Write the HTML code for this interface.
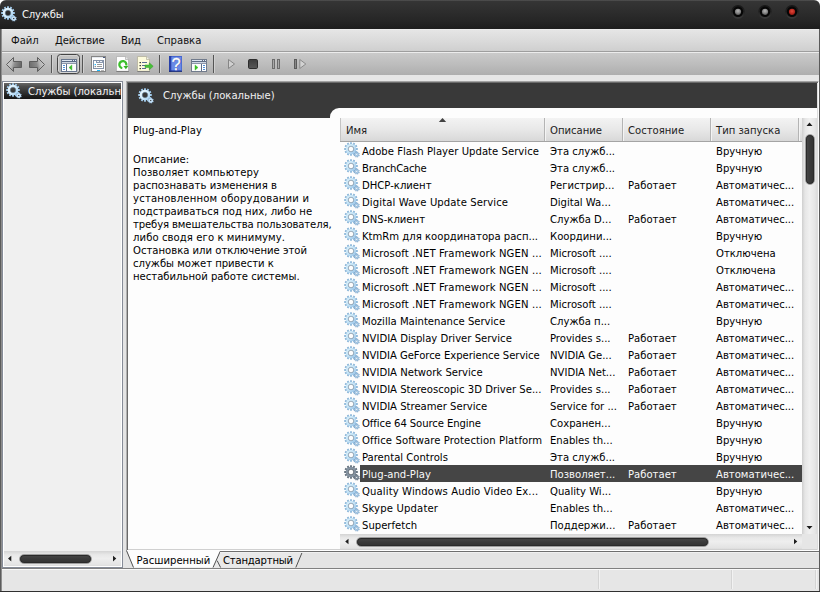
<!DOCTYPE html>
<html><head><meta charset="utf-8"><title>Службы</title>
<style>
*{box-sizing:border-box;margin:0;padding:0}
html,body{width:820px;height:592px;overflow:hidden;background:#fff}
body{font-family:"DejaVu Sans Condensed","Liberation Sans",sans-serif;font-size:11.2px;color:#000;position:relative;line-height:13px}
.abs,#win div,#win span,#win svg{position:absolute}
span{white-space:nowrap}
#win{left:0;top:0;width:820px;height:592px;background:#e4e4e4;border-radius:6px 6px 0 0;overflow:hidden;position:absolute}
/* title */
#title{left:0;top:0;width:820px;height:29px;background:linear-gradient(#5a5a5a 0,#353535 1.2px,#2d2d2d 40%,#262626 70%,#1d1d1d)}
#title .txt{left:22px;top:8px;color:#f4f4f4;font-size:11.2px;letter-spacing:-.2px}
.wb{width:14px;height:14px;border-radius:50%;top:5px;background:radial-gradient(circle at 50% 50%,#050505 0,#070707 4.8px,#1d1d1d 5.3px,#232323 6px,#313131 6.7px,rgba(49,49,49,0) 7px)}
.wb i{position:absolute;left:3.7px;top:3.5px;width:6.6px;height:6.6px;border-radius:50%}
/* menu */
#menu{left:0;top:29px;width:820px;height:23px;background:linear-gradient(#f0f0f0 0,#e5e5e5 1.2px,#dadada 55%,#cfcfcf);border-bottom:1px solid #9e9e9e}
#menu span{top:5px;font-size:11.2px;color:#111}
/* toolbar */
#tool{left:0;top:52px;width:820px;height:23px;background:linear-gradient(#cacaca,#bdbdbd 50%,#aeaeae);border-top:1px solid #ececec}
#strip{left:0;top:75px;width:820px;height:6px;background:#e6e6e6}
.sep{width:1px;top:55px;height:18px;background:#555;box-shadow:1px 0 0 #d0d0d0}
#tbtn{left:57px;top:54px;width:23px;height:20px;border:1px solid #454545;border-radius:3.5px;background:linear-gradient(#c4c4c4,#b4b4b4);box-shadow:inset 0 0 0 1px #d4d4d4}
/* left pane */
#lp{left:2px;top:81px;width:121px;height:487px;background:#f0f0f0;border:1px solid #868c98;box-shadow:inset 0 0 0 1px #fff}
#lsel{left:4px;top:83px;width:117px;height:16px;background:linear-gradient(#686868,#4c4c4c 22%,#343434 55%,#1d1d1d 85%,#141414);overflow:hidden}
#lsel span{letter-spacing:-.04px;left:24px;top:2px;color:#f4f4f4}
/* right pane */
#rp{left:126px;top:81px;width:693px;height:471px;background:#fdfdfd;border-left:1px solid #b0b0b0;border-top:1px solid #a2a2a2;border-right:1px solid #fcfcfc;border-bottom:1px solid #fff;box-shadow:inset 1px 1px 0 #6a6a6a,inset 0 -1px 0 #fff,inset -1px 0 0 #dedede,inset 0 -2px 0 #d0d0d0}
#rhead{left:128px;top:83px;width:689px;height:35px;background:#393939}
#rhead span{left:35px;top:5.5px;color:#f0f0f0}
#lbox{left:330px;top:108px;width:487px;height:441px;background:#fdfdfd;border-top-left-radius:9px}
#desc{left:133px;top:152.5px;width:205px;line-height:13px;white-space:nowrap}
#dtitle{left:133px;top:124px}
#desc span{position:static!important}
/* list */
#lh{left:340px;top:118px;width:462px;height:24px;background:linear-gradient(#f3f3f3,#e8e8e8 50%,#d8d8d8);border-bottom:1px solid #a4a4a4;box-shadow:inset 1px 0 0 #c4c4c4}
.hc{top:0;height:23px;border-right:1px solid #b4b4b4;box-shadow:1px 0 0 #f4f4f4}
.hc span{left:5px;top:6px;color:#222}
.row{left:340px;width:462px;height:17px}
.row .ic{left:3px;top:-1px}
.row span{top:3px;color:#000}
.row .bar{display:none}
.c1{left:22px}.c2{left:210px}.c3{left:288px}.c4{left:376px}
.row.sel .bar{display:block;left:20px;top:0;width:442px;height:17px;background:#454545}
.row.sel span{color:#f8f8f8}
/* scrollbars */
#vs{left:802px;top:118px;width:15px;height:416px;background:linear-gradient(90deg,#cfcfcf,#e6e6e6 20%,#f0f0f0 50%,#e6e6e6 85%,#dcdcdc)}
.thumb{background:linear-gradient(#484848,#3a3a3a 50%,#323232);border:1px solid #9e9e9e;border-radius:5px;box-shadow:inset 0 0 0 1px #2a2a2a}
.thumb.v{background:linear-gradient(90deg,#484848,#3a3a3a 50%,#323232)}
#hs{left:340px;top:534px;width:462px;height:15px;background:linear-gradient(#d4d4d4,#e8e8e8 25%,#eeeeee 50%,#e4e4e4 90%,#dcdcdc)}
#corner{left:802px;top:534px;width:15px;height:15px;background:#e6e6e6}
#lhs{left:4px;top:551px;width:117px;height:15px;background:linear-gradient(#d4d4d4,#e8e8e8 25%,#eeeeee 50%,#e4e4e4 90%,#dcdcdc)}
.arr{width:0;height:0;border:4px solid transparent}
/* tabs */
#tabs{left:126px;top:550px;width:694px;height:18px}
/* status */
#status{left:0;top:568px;width:820px;height:24px;border-top:1px solid #808080;background:#e6e6e6;box-shadow:inset 0 1px 0 #fafafa,inset 0 -1px 0 #f4f4f4}
#bl{left:0;top:29px;width:2px;height:563px;background:linear-gradient(90deg,#5c5c5c 50%,#8e8e8e 50%)}
#br{left:819px;top:29px;width:1px;height:563px;background:#5a5a5a}
#bb{left:0;top:591px;width:820px;height:1px;background:#303030}
.sd{top:1px;width:1px;height:19px;background:#d4d4d4;box-shadow:1px 0 0 #f2f2f2}
</style></head><body>
<svg width="0" height="0" style="position:absolute">
<defs>
<linearGradient id="gg" x1="0" y1="0" x2="1" y2="1"><stop offset="0" stop-color="#eaf7ff"/><stop offset=".55" stop-color="#d4ecfb"/><stop offset="1" stop-color="#a8d2f2"/></linearGradient>
<linearGradient id="gw1" x1="0" y1="0" x2="1" y2="1"><stop offset="0" stop-color="#d6eefa"/><stop offset=".55" stop-color="#c2e2f6"/><stop offset="1" stop-color="#9cc6e8"/></linearGradient>
</defs></svg>
<div id="win">
<div id="title"><svg width="17" height="17" viewBox="0 0 17 17" style="left:0px;top:5px"><path d="M12.7,7.0 L14.8,7.1 L14.8,8.9 L12.7,9.0 L12.6,9.5 L14.4,10.6 L13.5,12.2 L11.6,11.2 L11.2,11.6 L12.2,13.5 L10.6,14.4 L9.5,12.6 L9.0,12.7 L8.9,14.8 L7.1,14.8 L7.0,12.7 L6.5,12.6 L5.4,14.4 L3.8,13.5 L4.8,11.6 L4.4,11.2 L2.5,12.2 L1.6,10.6 L3.4,9.5 L3.3,9.0 L1.2,8.9 L1.2,7.1 L3.3,7.0 L3.4,6.5 L1.6,5.4 L2.5,3.8 L4.4,4.8 L4.8,4.4 L3.8,2.5 L5.4,1.6 L6.5,3.4 L7.0,3.3 L7.1,1.2 L8.9,1.2 L9.0,3.3 L9.5,3.4 L10.6,1.6 L12.2,2.5 L11.2,4.4 L11.6,4.8 L13.5,3.8 L14.4,5.4 L12.6,6.5Z M5.10,8.00 a2.9,2.9 0 1,0 5.8,0 a2.9,2.9 0 1,0 -5.8,0Z" fill="#9fc9ea" fill-rule="evenodd"/><circle cx="8" cy="8" r="4.0" fill="none" stroke="url(#gg)" stroke-width="2.4"/><circle cx="8" cy="8" r="2.75" fill="none" stroke="#5f7486" stroke-width=".7" stroke-opacity=".8"/><path d="M15.8,13.8 L16.7,14.2 L16.3,15.2 L15.4,14.9 L15.1,15.2 L15.4,16.1 L14.4,16.5 L14.0,15.6 L13.6,15.6 L13.2,16.5 L12.2,16.1 L12.5,15.2 L12.2,14.9 L11.3,15.2 L10.9,14.2 L11.8,13.8 L11.8,13.4 L10.9,13.0 L11.3,12.0 L12.2,12.3 L12.5,12.0 L12.2,11.1 L13.2,10.7 L13.6,11.6 L14.0,11.6 L14.4,10.7 L15.4,11.1 L15.1,12.0 L15.4,12.3 L16.3,12.0 L16.7,13.0 L15.8,13.4Z M13.05,13.60 a0.75,0.75 0 1,0 1.5,0 a0.75,0.75 0 1,0 -1.5,0Z" fill="#a0c6e6" fill-rule="evenodd"/><circle cx="13.80" cy="13.60" r="1.5" fill="none" stroke="#c8e2f6" stroke-width="1.3"/></svg><span class="txt">Службы</span>
<svg width="90" height="28" viewBox="724 0 90 28" style="left:724px;top:0">
<defs><linearGradient id="wr" x1="0" y1="0" x2="0" y2="1"><stop offset="0" stop-color="#161616"/><stop offset=".5" stop-color="#222"/><stop offset="1" stop-color="#3b3b3b"/></linearGradient>
<radialGradient id="wg" cx=".5" cy=".35" r=".7"><stop offset="0" stop-color="#b4b4b4"/><stop offset=".5" stop-color="#8a8a8a"/><stop offset="1" stop-color="#4e4e4e"/></radialGradient>
<radialGradient id="wrd" cx=".5" cy=".4" r=".7"><stop offset="0" stop-color="#e04a3c"/><stop offset=".5" stop-color="#bc2a20"/><stop offset="1" stop-color="#7c1410"/></radialGradient></defs>
<circle cx="738" cy="11.8" r="6.9" fill="url(#wr)"/><circle cx="738" cy="11.8" r="5.2" fill="#060606"/><circle cx="738" cy="11.8" r="3.1" fill="url(#wg)"/>
<circle cx="765" cy="11.8" r="6.9" fill="url(#wr)"/><circle cx="765" cy="11.8" r="5.2" fill="#060606"/><circle cx="765" cy="11.8" r="3.1" fill="url(#wg)"/>
<circle cx="792" cy="11.8" r="6.9" fill="url(#wr)"/><circle cx="792" cy="11.8" r="5.2" fill="#060606"/><circle cx="792" cy="11.8" r="3.1" fill="url(#wrd)"/>
</svg>
</div>
<div id="menu"><span style="left:11px">Файл</span><span style="left:55px;letter-spacing:-.15px">Действие</span><span style="left:121px;letter-spacing:-.2px">Вид</span><span style="left:157px">Справка</span></div>
<div id="tool"></div>
<div id="strip"></div>
<div class="sep" style="left:51px"></div><div class="sep" style="left:82px"></div><div class="sep" style="left:159px"></div><div class="sep" style="left:213px"></div>
<div id="tbtn"></div>
<svg width="330" height="24" viewBox="0 52 330 24" style="left:0;top:52px">
<defs>
<linearGradient id="ag" x1="0" y1="0" x2="0" y2="1"><stop offset="0" stop-color="#c4c4c4"/><stop offset=".45" stop-color="#808080"/><stop offset="1" stop-color="#bcbcbc"/></linearGradient>
<linearGradient id="sg" x1="0" y1="0" x2="0" y2="1"><stop offset="0" stop-color="#3c3c3c"/><stop offset="1" stop-color="#585858"/></linearGradient>
</defs>
<!-- back / forward arrows -->
<linearGradient id="ab" x1="0" y1="0" x2="1" y2="0.25"><stop offset="0" stop-color="#cecece"/><stop offset=".42" stop-color="#bcbcbc"/><stop offset=".62" stop-color="#8e8e8e"/><stop offset="1" stop-color="#6a6a6a"/></linearGradient>
<linearGradient id="af" x1="0" y1="0.25" x2="1" y2="0"><stop offset="0" stop-color="#727272"/><stop offset=".4" stop-color="#8a8a8a"/><stop offset=".58" stop-color="#b4b4b4"/><stop offset="1" stop-color="#d0d0d0"/></linearGradient>
<path d="M6.5,64.5 L13.5,57.5 L13.5,61.5 L21.5,61.5 L21.5,67.5 L13.5,67.5 L13.5,71.5Z" fill="url(#ab)" stroke="#5e5e5e" stroke-width="1" stroke-linejoin="round"/>
<path d="M44.5,64.5 L37.5,57.5 L37.5,61.5 L29.5,61.5 L29.5,67.5 L37.5,67.5 L37.5,71.5Z" fill="url(#af)" stroke="#5e5e5e" stroke-width="1" stroke-linejoin="round"/>
<!-- console tree icon -->
<g>
<rect x="61" y="59" width="16" height="13" fill="#69778f"/>
<rect x="62" y="60" width="14" height="2" fill="#5a6a86"/>
<rect x="62" y="60" width="10" height="1" fill="#dde5f0"/><rect x="73" y="60" width="1" height="1" fill="#e6ecf5"/><rect x="75" y="60" width="1" height="1" fill="#e6ecf5"/>
<rect x="62" y="62" width="14" height="1" fill="#cdd5e1"/>
<rect x="62" y="63" width="14" height="1" fill="#8d97ab"/>
<rect x="62" y="64" width="4" height="7" fill="#fff"/><rect x="67" y="64" width="9" height="7" fill="#fcfcfc"/>
<rect x="66" y="64" width="1" height="7" fill="#5e6d88"/>
<rect x="63" y="65" width="2" height="1" rx=".4" fill="#2c78d2"/><rect x="63" y="67" width="2" height="1" rx=".4" fill="#2c78d2"/><rect x="63" y="69" width="2" height="1" rx=".4" fill="#2c78d2"/>
<path d="M71.9,64.9 L71.9,70.2 L69,67.55Z" fill="#36b826" stroke="#36b826" stroke-width=".4" stroke-linejoin="round"/>
</g>
<!-- properties icon -->
<g>
<rect x="91.5" y="56.5" width="14" height="15" fill="#fdfdfd" stroke="#858585" stroke-width="1"/>
<rect x="92" y="57" width="13" height="1" fill="#e4e8ee"/>
<rect x="103" y="57" width="2" height="1" fill="#4a5a80"/>
<rect x="93.5" y="60.5" width="10" height="8" fill="#fff" stroke="#8492a8" stroke-width="1"/>
<rect x="96" y="61" width="7" height="2" fill="#8c9ab0"/>
<rect x="97" y="61" width="2" height="1" fill="#f4f6fa"/><rect x="100" y="61" width="2" height="1" fill="#f4f6fa"/>
<rect x="94.6" y="64" width="1.3" height="1.2" fill="#18b4fc"/><rect x="97" y="64" width="5" height="1" fill="#9a9a9a"/>
<rect x="94.6" y="66" width="1.3" height="1.2" fill="#8a8a8a"/><rect x="97" y="66" width="5" height="1" fill="#9a9a9a"/>
<rect x="97" y="70" width="3" height="1" fill="#1ab8fc"/><rect x="101" y="70" width="3" height="1" fill="#b4b4b4"/>
</g>
<!-- refresh icon -->
<g>
<path d="M116.5,56.5 L125.5,56.5 L128.5,59.5 L128.5,71.3 L116.5,71.3Z" fill="#fefefe" stroke="#b0b0b0" stroke-width=".8"/><rect x="116.3" y="71" width="12.6" height="1" fill="#7c7c7c"/>
<path d="M125.5,56.5 L125.5,59.5 L128.5,59.5" fill="#e8e8e8" stroke="#a0a0a0" stroke-width=".6"/>
<path d="M122.3,68.1 A3.5,3.5 0 1,1 126.25,65.4" fill="none" stroke="#3cc02c" stroke-width="2.3"/>
<path d="M123.4,66 L128.3,66 L125.9,69.2Z" fill="#34b424"/>
</g>
<!-- export icon -->
<g>
<path d="M137.5,56.5 L146.5,56.5 L149.5,59.5 L149.5,71.3 L137.5,71.3Z" fill="#fdfbdc" stroke="#b4b09c" stroke-width=".8"/><rect x="137.3" y="71" width="12.6" height="1" fill="#7c7c7c"/>
<path d="M146.5,56.5 L146.5,59.5 L149.5,59.5" fill="#f0f0e8" stroke="#a8a490" stroke-width=".6"/>
<rect x="139.6" y="62" width="1.2" height="1.2" fill="#111"/><rect x="142" y="62" width="5" height="1" fill="#5a6c94"/>
<rect x="139.6" y="65" width="1.2" height="1.2" fill="#111"/><rect x="142" y="65" width="3" height="1" fill="#5a6c94"/>
<rect x="139.6" y="68" width="1.2" height="1.2" fill="#111"/><rect x="142" y="68" width="4" height="1" fill="#5a6c94"/>
<path d="M145,65 L149.3,65 L149.3,62.8 L153.2,66.3 L149.3,69.8 L149.3,67.6 L145,67.6Z" fill="#48c038" stroke="#2e9c22" stroke-width=".5"/>
</g>
<!-- help icon -->
<g>
<rect x="169" y="56" width="13" height="15.8" fill="#4666d0"/>
<rect x="169" y="56" width="2.4" height="15.8" fill="#2840a8"/>
<rect x="171.4" y="57" width="9.8" height="13" fill="#6a8ae4"/>
<rect x="169" y="70.8" width="13" height="1" fill="#1c2c70"/>
<text x="177" y="70.4" font-family="Liberation Sans,sans-serif" font-size="16" fill="#26348c" text-anchor="middle">?</text><text x="176.3" y="69.9" font-family="Liberation Sans,sans-serif" font-size="16" fill="#fff" stroke="#fff" stroke-width=".35" text-anchor="middle">?</text>
</g>
<!-- action pane icon -->
<g>
<rect x="191" y="59" width="16" height="13" fill="#717b8c"/>
<rect x="192" y="60" width="14" height="2" fill="#5f6d86"/>
<rect x="192" y="60" width="10" height="1" fill="#dde5f0"/><rect x="203" y="60" width="1" height="1" fill="#e6ecf5"/><rect x="205" y="60" width="1" height="1" fill="#e6ecf5"/>
<rect x="192" y="62" width="14" height="1" fill="#cdd5e1"/>
<rect x="192" y="63" width="14" height="1" fill="#8d97ab"/>
<rect x="192" y="64" width="9" height="7" fill="#fcfcfc"/><rect x="202" y="64" width="4" height="7" fill="#fff"/>
<rect x="201" y="64" width="1" height="7" fill="#5e6d88"/>
<rect x="203" y="65" width="2" height="1" rx=".4" fill="#2c78d2"/><rect x="203" y="67" width="2" height="1" rx=".4" fill="#2c78d2"/><rect x="203" y="69" width="2" height="1" rx=".4" fill="#2c78d2"/>
<path d="M195,64.9 L195,70.2 L198,67.55Z" fill="#36c022" stroke="#36c022" stroke-width=".4" stroke-linejoin="round"/>
</g>
<!-- play / stop / pause / restart -->
<path d="M228.5,59.5 L228.5,68.5 L234.5,64Z" fill="#d0d0d0" stroke="#868686" stroke-width="1" stroke-linejoin="round"/>
<rect x="248.5" y="59.5" width="9" height="9" rx="1.2" fill="url(#sg)" stroke="#2c2c2c" stroke-width="1"/>
<rect x="272.5" y="59.5" width="2" height="9" fill="#a8a8a8" stroke="#6c6c6c" stroke-width="1"/>
<rect x="277.5" y="59.5" width="2" height="9" fill="#a8a8a8" stroke="#6c6c6c" stroke-width="1"/>
<rect x="294.5" y="59.5" width="2" height="9" fill="#888" stroke="#5c5c5c" stroke-width="1"/>
<path d="M299.8,59.5 L299.8,68.5 L305.8,64Z" fill="#d2d2d2" stroke="#8a8a8a" stroke-width="1" stroke-linejoin="round"/>
</svg>

<div id="lp"></div>
<div id="lsel"><svg width="17" height="17" viewBox="0 0 17 17" style="left:1px;top:-1px"><path d="M12.7,7.0 L14.8,7.1 L14.8,8.9 L12.7,9.0 L12.6,9.5 L14.4,10.6 L13.5,12.2 L11.6,11.2 L11.2,11.6 L12.2,13.5 L10.6,14.4 L9.5,12.6 L9.0,12.7 L8.9,14.8 L7.1,14.8 L7.0,12.7 L6.5,12.6 L5.4,14.4 L3.8,13.5 L4.8,11.6 L4.4,11.2 L2.5,12.2 L1.6,10.6 L3.4,9.5 L3.3,9.0 L1.2,8.9 L1.2,7.1 L3.3,7.0 L3.4,6.5 L1.6,5.4 L2.5,3.8 L4.4,4.8 L4.8,4.4 L3.8,2.5 L5.4,1.6 L6.5,3.4 L7.0,3.3 L7.1,1.2 L8.9,1.2 L9.0,3.3 L9.5,3.4 L10.6,1.6 L12.2,2.5 L11.2,4.4 L11.6,4.8 L13.5,3.8 L14.4,5.4 L12.6,6.5Z M5.10,8.00 a2.9,2.9 0 1,0 5.8,0 a2.9,2.9 0 1,0 -5.8,0Z" fill="#9fc9ea" fill-rule="evenodd"/><circle cx="8" cy="8" r="4.0" fill="none" stroke="url(#gg)" stroke-width="2.4"/><circle cx="8" cy="8" r="2.75" fill="none" stroke="#5f7486" stroke-width=".7" stroke-opacity=".8"/><path d="M15.8,13.8 L16.7,14.2 L16.3,15.2 L15.4,14.9 L15.1,15.2 L15.4,16.1 L14.4,16.5 L14.0,15.6 L13.6,15.6 L13.2,16.5 L12.2,16.1 L12.5,15.2 L12.2,14.9 L11.3,15.2 L10.9,14.2 L11.8,13.8 L11.8,13.4 L10.9,13.0 L11.3,12.0 L12.2,12.3 L12.5,12.0 L12.2,11.1 L13.2,10.7 L13.6,11.6 L14.0,11.6 L14.4,10.7 L15.4,11.1 L15.1,12.0 L15.4,12.3 L16.3,12.0 L16.7,13.0 L15.8,13.4Z M13.05,13.60 a0.75,0.75 0 1,0 1.5,0 a0.75,0.75 0 1,0 -1.5,0Z" fill="#a0c6e6" fill-rule="evenodd"/><circle cx="13.80" cy="13.60" r="1.5" fill="none" stroke="#c8e2f6" stroke-width="1.3"/></svg><span>Службы (локальн</span></div>
<div id="lhs"></div><div class="thumb" style="left:19px;top:554px;width:73px;height:10px"></div>
<div id="rp"></div>
<div id="rhead"><svg width="17" height="17" viewBox="0 0 17 17" style="left:9px;top:4px"><path d="M12.7,7.0 L14.8,7.1 L14.8,8.9 L12.7,9.0 L12.6,9.5 L14.4,10.6 L13.5,12.2 L11.6,11.2 L11.2,11.6 L12.2,13.5 L10.6,14.4 L9.5,12.6 L9.0,12.7 L8.9,14.8 L7.1,14.8 L7.0,12.7 L6.5,12.6 L5.4,14.4 L3.8,13.5 L4.8,11.6 L4.4,11.2 L2.5,12.2 L1.6,10.6 L3.4,9.5 L3.3,9.0 L1.2,8.9 L1.2,7.1 L3.3,7.0 L3.4,6.5 L1.6,5.4 L2.5,3.8 L4.4,4.8 L4.8,4.4 L3.8,2.5 L5.4,1.6 L6.5,3.4 L7.0,3.3 L7.1,1.2 L8.9,1.2 L9.0,3.3 L9.5,3.4 L10.6,1.6 L12.2,2.5 L11.2,4.4 L11.6,4.8 L13.5,3.8 L14.4,5.4 L12.6,6.5Z M5.10,8.00 a2.9,2.9 0 1,0 5.8,0 a2.9,2.9 0 1,0 -5.8,0Z" fill="#9fc9ea" fill-rule="evenodd"/><circle cx="8" cy="8" r="4.0" fill="none" stroke="url(#gg)" stroke-width="2.4"/><circle cx="8" cy="8" r="2.75" fill="none" stroke="#5f7486" stroke-width=".7" stroke-opacity=".8"/><path d="M15.8,13.8 L16.7,14.2 L16.3,15.2 L15.4,14.9 L15.1,15.2 L15.4,16.1 L14.4,16.5 L14.0,15.6 L13.6,15.6 L13.2,16.5 L12.2,16.1 L12.5,15.2 L12.2,14.9 L11.3,15.2 L10.9,14.2 L11.8,13.8 L11.8,13.4 L10.9,13.0 L11.3,12.0 L12.2,12.3 L12.5,12.0 L12.2,11.1 L13.2,10.7 L13.6,11.6 L14.0,11.6 L14.4,10.7 L15.4,11.1 L15.1,12.0 L15.4,12.3 L16.3,12.0 L16.7,13.0 L15.8,13.4Z M13.05,13.60 a0.75,0.75 0 1,0 1.5,0 a0.75,0.75 0 1,0 -1.5,0Z" fill="#a0c6e6" fill-rule="evenodd"/><circle cx="13.80" cy="13.60" r="1.5" fill="none" stroke="#c8e2f6" stroke-width="1.3"/></svg><span>Службы (локальные)</span></div>
<div id="lbox"></div>
<span id="dtitle">Plug-and-Play</span>
<div id="desc"><span style="letter-spacing:0.094px">Описание:</span><br><span style="letter-spacing:0.093px">Позволяет компьютеру</span><br><span style="letter-spacing:0.050px">распознавать изменения в</span><br><span style="letter-spacing:0.207px">установленном оборудовании и</span><br><span style="letter-spacing:0.018px">подстраиваться под них, либо не</span><br><span style="letter-spacing:-0.119px">требуя вмешательства пользователя,</span><br><span style="letter-spacing:0.080px">либо сводя его к минимуму.</span><br><span style="letter-spacing:-0.002px">Остановка или отключение этой</span><br><span style="letter-spacing:-0.020px">службы может привести к</span><br><span style="letter-spacing:0.004px">нестабильной работе системы.</span></div>
<div id="lh">
<div class="hc" style="left:0;width:205px"><span style="left:6px">Имя</span></div>
<div class="hc" style="left:205px;width:78px"><span style="left:5px">Описание</span></div>
<div class="hc" style="left:283px;width:88px"><span style="left:5px">Состояние</span></div>
<div class="hc" style="left:371px;width:88px"><span style="left:5px">Тип запуска</span></div>
</div>
<div class="row" style="top:142px"><svg class="ic" width="17" height="17" viewBox="0 0 17 17"><path d="M12.7,7.0 L14.8,7.1 L14.8,8.9 L12.7,9.0 L12.6,9.5 L14.4,10.6 L13.5,12.2 L11.6,11.2 L11.2,11.6 L12.2,13.5 L10.6,14.4 L9.5,12.6 L9.0,12.7 L8.9,14.8 L7.1,14.8 L7.0,12.7 L6.5,12.6 L5.4,14.4 L3.8,13.5 L4.8,11.6 L4.4,11.2 L2.5,12.2 L1.6,10.6 L3.4,9.5 L3.3,9.0 L1.2,8.9 L1.2,7.1 L3.3,7.0 L3.4,6.5 L1.6,5.4 L2.5,3.8 L4.4,4.8 L4.8,4.4 L3.8,2.5 L5.4,1.6 L6.5,3.4 L7.0,3.3 L7.1,1.2 L8.9,1.2 L9.0,3.3 L9.5,3.4 L10.6,1.6 L12.2,2.5 L11.2,4.4 L11.6,4.8 L13.5,3.8 L14.4,5.4 L12.6,6.5Z M5.10,8.00 a2.9,2.9 0 1,0 5.8,0 a2.9,2.9 0 1,0 -5.8,0Z" fill="#8db7d9" fill-rule="evenodd"/><circle cx="8" cy="8" r="4.0" fill="none" stroke="url(#gw1)" stroke-width="2.4"/><circle cx="8" cy="8" r="2.75" fill="none" stroke="#66788a" stroke-width=".7" stroke-opacity=".8"/><path d="M15.8,13.8 L16.7,14.2 L16.3,15.2 L15.4,14.9 L15.1,15.2 L15.4,16.1 L14.4,16.5 L14.0,15.6 L13.6,15.6 L13.2,16.5 L12.2,16.1 L12.5,15.2 L12.2,14.9 L11.3,15.2 L10.9,14.2 L11.8,13.8 L11.8,13.4 L10.9,13.0 L11.3,12.0 L12.2,12.3 L12.5,12.0 L12.2,11.1 L13.2,10.7 L13.6,11.6 L14.0,11.6 L14.4,10.7 L15.4,11.1 L15.1,12.0 L15.4,12.3 L16.3,12.0 L16.7,13.0 L15.8,13.4Z M13.05,13.60 a0.75,0.75 0 1,0 1.5,0 a0.75,0.75 0 1,0 -1.5,0Z" fill="#7ea6ca" fill-rule="evenodd"/><circle cx="13.80" cy="13.60" r="1.5" fill="none" stroke="#acccE6" stroke-width="1.3"/></svg><div class="bar"></div><span class="c1" style="letter-spacing:0.03px">Adobe Flash Player Update Service</span><span class="c2">Эта служб...</span><span class="c3"></span><span class="c4">Вручную</span></div>
<div class="row" style="top:159px"><svg class="ic" width="17" height="17" viewBox="0 0 17 17"><path d="M12.7,7.0 L14.8,7.1 L14.8,8.9 L12.7,9.0 L12.6,9.5 L14.4,10.6 L13.5,12.2 L11.6,11.2 L11.2,11.6 L12.2,13.5 L10.6,14.4 L9.5,12.6 L9.0,12.7 L8.9,14.8 L7.1,14.8 L7.0,12.7 L6.5,12.6 L5.4,14.4 L3.8,13.5 L4.8,11.6 L4.4,11.2 L2.5,12.2 L1.6,10.6 L3.4,9.5 L3.3,9.0 L1.2,8.9 L1.2,7.1 L3.3,7.0 L3.4,6.5 L1.6,5.4 L2.5,3.8 L4.4,4.8 L4.8,4.4 L3.8,2.5 L5.4,1.6 L6.5,3.4 L7.0,3.3 L7.1,1.2 L8.9,1.2 L9.0,3.3 L9.5,3.4 L10.6,1.6 L12.2,2.5 L11.2,4.4 L11.6,4.8 L13.5,3.8 L14.4,5.4 L12.6,6.5Z M5.10,8.00 a2.9,2.9 0 1,0 5.8,0 a2.9,2.9 0 1,0 -5.8,0Z" fill="#8db7d9" fill-rule="evenodd"/><circle cx="8" cy="8" r="4.0" fill="none" stroke="url(#gw1)" stroke-width="2.4"/><circle cx="8" cy="8" r="2.75" fill="none" stroke="#66788a" stroke-width=".7" stroke-opacity=".8"/><path d="M15.8,13.8 L16.7,14.2 L16.3,15.2 L15.4,14.9 L15.1,15.2 L15.4,16.1 L14.4,16.5 L14.0,15.6 L13.6,15.6 L13.2,16.5 L12.2,16.1 L12.5,15.2 L12.2,14.9 L11.3,15.2 L10.9,14.2 L11.8,13.8 L11.8,13.4 L10.9,13.0 L11.3,12.0 L12.2,12.3 L12.5,12.0 L12.2,11.1 L13.2,10.7 L13.6,11.6 L14.0,11.6 L14.4,10.7 L15.4,11.1 L15.1,12.0 L15.4,12.3 L16.3,12.0 L16.7,13.0 L15.8,13.4Z M13.05,13.60 a0.75,0.75 0 1,0 1.5,0 a0.75,0.75 0 1,0 -1.5,0Z" fill="#7ea6ca" fill-rule="evenodd"/><circle cx="13.80" cy="13.60" r="1.5" fill="none" stroke="#acccE6" stroke-width="1.3"/></svg><div class="bar"></div><span class="c1" style="letter-spacing:-0.22px">BranchCache</span><span class="c2">Эта служб...</span><span class="c3"></span><span class="c4">Вручную</span></div>
<div class="row" style="top:176px"><svg class="ic" width="17" height="17" viewBox="0 0 17 17"><path d="M12.7,7.0 L14.8,7.1 L14.8,8.9 L12.7,9.0 L12.6,9.5 L14.4,10.6 L13.5,12.2 L11.6,11.2 L11.2,11.6 L12.2,13.5 L10.6,14.4 L9.5,12.6 L9.0,12.7 L8.9,14.8 L7.1,14.8 L7.0,12.7 L6.5,12.6 L5.4,14.4 L3.8,13.5 L4.8,11.6 L4.4,11.2 L2.5,12.2 L1.6,10.6 L3.4,9.5 L3.3,9.0 L1.2,8.9 L1.2,7.1 L3.3,7.0 L3.4,6.5 L1.6,5.4 L2.5,3.8 L4.4,4.8 L4.8,4.4 L3.8,2.5 L5.4,1.6 L6.5,3.4 L7.0,3.3 L7.1,1.2 L8.9,1.2 L9.0,3.3 L9.5,3.4 L10.6,1.6 L12.2,2.5 L11.2,4.4 L11.6,4.8 L13.5,3.8 L14.4,5.4 L12.6,6.5Z M5.10,8.00 a2.9,2.9 0 1,0 5.8,0 a2.9,2.9 0 1,0 -5.8,0Z" fill="#8db7d9" fill-rule="evenodd"/><circle cx="8" cy="8" r="4.0" fill="none" stroke="url(#gw1)" stroke-width="2.4"/><circle cx="8" cy="8" r="2.75" fill="none" stroke="#66788a" stroke-width=".7" stroke-opacity=".8"/><path d="M15.8,13.8 L16.7,14.2 L16.3,15.2 L15.4,14.9 L15.1,15.2 L15.4,16.1 L14.4,16.5 L14.0,15.6 L13.6,15.6 L13.2,16.5 L12.2,16.1 L12.5,15.2 L12.2,14.9 L11.3,15.2 L10.9,14.2 L11.8,13.8 L11.8,13.4 L10.9,13.0 L11.3,12.0 L12.2,12.3 L12.5,12.0 L12.2,11.1 L13.2,10.7 L13.6,11.6 L14.0,11.6 L14.4,10.7 L15.4,11.1 L15.1,12.0 L15.4,12.3 L16.3,12.0 L16.7,13.0 L15.8,13.4Z M13.05,13.60 a0.75,0.75 0 1,0 1.5,0 a0.75,0.75 0 1,0 -1.5,0Z" fill="#7ea6ca" fill-rule="evenodd"/><circle cx="13.80" cy="13.60" r="1.5" fill="none" stroke="#acccE6" stroke-width="1.3"/></svg><div class="bar"></div><span class="c1">DHCP-клиент</span><span class="c2">Регистрир...</span><span class="c3">Работает</span><span class="c4">Автоматичес...</span></div>
<div class="row" style="top:193px"><svg class="ic" width="17" height="17" viewBox="0 0 17 17"><path d="M12.7,7.0 L14.8,7.1 L14.8,8.9 L12.7,9.0 L12.6,9.5 L14.4,10.6 L13.5,12.2 L11.6,11.2 L11.2,11.6 L12.2,13.5 L10.6,14.4 L9.5,12.6 L9.0,12.7 L8.9,14.8 L7.1,14.8 L7.0,12.7 L6.5,12.6 L5.4,14.4 L3.8,13.5 L4.8,11.6 L4.4,11.2 L2.5,12.2 L1.6,10.6 L3.4,9.5 L3.3,9.0 L1.2,8.9 L1.2,7.1 L3.3,7.0 L3.4,6.5 L1.6,5.4 L2.5,3.8 L4.4,4.8 L4.8,4.4 L3.8,2.5 L5.4,1.6 L6.5,3.4 L7.0,3.3 L7.1,1.2 L8.9,1.2 L9.0,3.3 L9.5,3.4 L10.6,1.6 L12.2,2.5 L11.2,4.4 L11.6,4.8 L13.5,3.8 L14.4,5.4 L12.6,6.5Z M5.10,8.00 a2.9,2.9 0 1,0 5.8,0 a2.9,2.9 0 1,0 -5.8,0Z" fill="#8db7d9" fill-rule="evenodd"/><circle cx="8" cy="8" r="4.0" fill="none" stroke="url(#gw1)" stroke-width="2.4"/><circle cx="8" cy="8" r="2.75" fill="none" stroke="#66788a" stroke-width=".7" stroke-opacity=".8"/><path d="M15.8,13.8 L16.7,14.2 L16.3,15.2 L15.4,14.9 L15.1,15.2 L15.4,16.1 L14.4,16.5 L14.0,15.6 L13.6,15.6 L13.2,16.5 L12.2,16.1 L12.5,15.2 L12.2,14.9 L11.3,15.2 L10.9,14.2 L11.8,13.8 L11.8,13.4 L10.9,13.0 L11.3,12.0 L12.2,12.3 L12.5,12.0 L12.2,11.1 L13.2,10.7 L13.6,11.6 L14.0,11.6 L14.4,10.7 L15.4,11.1 L15.1,12.0 L15.4,12.3 L16.3,12.0 L16.7,13.0 L15.8,13.4Z M13.05,13.60 a0.75,0.75 0 1,0 1.5,0 a0.75,0.75 0 1,0 -1.5,0Z" fill="#7ea6ca" fill-rule="evenodd"/><circle cx="13.80" cy="13.60" r="1.5" fill="none" stroke="#acccE6" stroke-width="1.3"/></svg><div class="bar"></div><span class="c1" style="letter-spacing:0.1px">Digital Wave Update Service</span><span class="c2">Digital Wa...</span><span class="c3"></span><span class="c4">Автоматичес...</span></div>
<div class="row" style="top:210px"><svg class="ic" width="17" height="17" viewBox="0 0 17 17"><path d="M12.7,7.0 L14.8,7.1 L14.8,8.9 L12.7,9.0 L12.6,9.5 L14.4,10.6 L13.5,12.2 L11.6,11.2 L11.2,11.6 L12.2,13.5 L10.6,14.4 L9.5,12.6 L9.0,12.7 L8.9,14.8 L7.1,14.8 L7.0,12.7 L6.5,12.6 L5.4,14.4 L3.8,13.5 L4.8,11.6 L4.4,11.2 L2.5,12.2 L1.6,10.6 L3.4,9.5 L3.3,9.0 L1.2,8.9 L1.2,7.1 L3.3,7.0 L3.4,6.5 L1.6,5.4 L2.5,3.8 L4.4,4.8 L4.8,4.4 L3.8,2.5 L5.4,1.6 L6.5,3.4 L7.0,3.3 L7.1,1.2 L8.9,1.2 L9.0,3.3 L9.5,3.4 L10.6,1.6 L12.2,2.5 L11.2,4.4 L11.6,4.8 L13.5,3.8 L14.4,5.4 L12.6,6.5Z M5.10,8.00 a2.9,2.9 0 1,0 5.8,0 a2.9,2.9 0 1,0 -5.8,0Z" fill="#8db7d9" fill-rule="evenodd"/><circle cx="8" cy="8" r="4.0" fill="none" stroke="url(#gw1)" stroke-width="2.4"/><circle cx="8" cy="8" r="2.75" fill="none" stroke="#66788a" stroke-width=".7" stroke-opacity=".8"/><path d="M15.8,13.8 L16.7,14.2 L16.3,15.2 L15.4,14.9 L15.1,15.2 L15.4,16.1 L14.4,16.5 L14.0,15.6 L13.6,15.6 L13.2,16.5 L12.2,16.1 L12.5,15.2 L12.2,14.9 L11.3,15.2 L10.9,14.2 L11.8,13.8 L11.8,13.4 L10.9,13.0 L11.3,12.0 L12.2,12.3 L12.5,12.0 L12.2,11.1 L13.2,10.7 L13.6,11.6 L14.0,11.6 L14.4,10.7 L15.4,11.1 L15.1,12.0 L15.4,12.3 L16.3,12.0 L16.7,13.0 L15.8,13.4Z M13.05,13.60 a0.75,0.75 0 1,0 1.5,0 a0.75,0.75 0 1,0 -1.5,0Z" fill="#7ea6ca" fill-rule="evenodd"/><circle cx="13.80" cy="13.60" r="1.5" fill="none" stroke="#acccE6" stroke-width="1.3"/></svg><div class="bar"></div><span class="c1">DNS-клиент</span><span class="c2">Служба D...</span><span class="c3">Работает</span><span class="c4">Автоматичес...</span></div>
<div class="row" style="top:227px"><svg class="ic" width="17" height="17" viewBox="0 0 17 17"><path d="M12.7,7.0 L14.8,7.1 L14.8,8.9 L12.7,9.0 L12.6,9.5 L14.4,10.6 L13.5,12.2 L11.6,11.2 L11.2,11.6 L12.2,13.5 L10.6,14.4 L9.5,12.6 L9.0,12.7 L8.9,14.8 L7.1,14.8 L7.0,12.7 L6.5,12.6 L5.4,14.4 L3.8,13.5 L4.8,11.6 L4.4,11.2 L2.5,12.2 L1.6,10.6 L3.4,9.5 L3.3,9.0 L1.2,8.9 L1.2,7.1 L3.3,7.0 L3.4,6.5 L1.6,5.4 L2.5,3.8 L4.4,4.8 L4.8,4.4 L3.8,2.5 L5.4,1.6 L6.5,3.4 L7.0,3.3 L7.1,1.2 L8.9,1.2 L9.0,3.3 L9.5,3.4 L10.6,1.6 L12.2,2.5 L11.2,4.4 L11.6,4.8 L13.5,3.8 L14.4,5.4 L12.6,6.5Z M5.10,8.00 a2.9,2.9 0 1,0 5.8,0 a2.9,2.9 0 1,0 -5.8,0Z" fill="#8db7d9" fill-rule="evenodd"/><circle cx="8" cy="8" r="4.0" fill="none" stroke="url(#gw1)" stroke-width="2.4"/><circle cx="8" cy="8" r="2.75" fill="none" stroke="#66788a" stroke-width=".7" stroke-opacity=".8"/><path d="M15.8,13.8 L16.7,14.2 L16.3,15.2 L15.4,14.9 L15.1,15.2 L15.4,16.1 L14.4,16.5 L14.0,15.6 L13.6,15.6 L13.2,16.5 L12.2,16.1 L12.5,15.2 L12.2,14.9 L11.3,15.2 L10.9,14.2 L11.8,13.8 L11.8,13.4 L10.9,13.0 L11.3,12.0 L12.2,12.3 L12.5,12.0 L12.2,11.1 L13.2,10.7 L13.6,11.6 L14.0,11.6 L14.4,10.7 L15.4,11.1 L15.1,12.0 L15.4,12.3 L16.3,12.0 L16.7,13.0 L15.8,13.4Z M13.05,13.60 a0.75,0.75 0 1,0 1.5,0 a0.75,0.75 0 1,0 -1.5,0Z" fill="#7ea6ca" fill-rule="evenodd"/><circle cx="13.80" cy="13.60" r="1.5" fill="none" stroke="#acccE6" stroke-width="1.3"/></svg><div class="bar"></div><span class="c1">KtmRm для координатора расп...</span><span class="c2">Координи...</span><span class="c3"></span><span class="c4">Вручную</span></div>
<div class="row" style="top:244px"><svg class="ic" width="17" height="17" viewBox="0 0 17 17"><path d="M12.7,7.0 L14.8,7.1 L14.8,8.9 L12.7,9.0 L12.6,9.5 L14.4,10.6 L13.5,12.2 L11.6,11.2 L11.2,11.6 L12.2,13.5 L10.6,14.4 L9.5,12.6 L9.0,12.7 L8.9,14.8 L7.1,14.8 L7.0,12.7 L6.5,12.6 L5.4,14.4 L3.8,13.5 L4.8,11.6 L4.4,11.2 L2.5,12.2 L1.6,10.6 L3.4,9.5 L3.3,9.0 L1.2,8.9 L1.2,7.1 L3.3,7.0 L3.4,6.5 L1.6,5.4 L2.5,3.8 L4.4,4.8 L4.8,4.4 L3.8,2.5 L5.4,1.6 L6.5,3.4 L7.0,3.3 L7.1,1.2 L8.9,1.2 L9.0,3.3 L9.5,3.4 L10.6,1.6 L12.2,2.5 L11.2,4.4 L11.6,4.8 L13.5,3.8 L14.4,5.4 L12.6,6.5Z M5.10,8.00 a2.9,2.9 0 1,0 5.8,0 a2.9,2.9 0 1,0 -5.8,0Z" fill="#8db7d9" fill-rule="evenodd"/><circle cx="8" cy="8" r="4.0" fill="none" stroke="url(#gw1)" stroke-width="2.4"/><circle cx="8" cy="8" r="2.75" fill="none" stroke="#66788a" stroke-width=".7" stroke-opacity=".8"/><path d="M15.8,13.8 L16.7,14.2 L16.3,15.2 L15.4,14.9 L15.1,15.2 L15.4,16.1 L14.4,16.5 L14.0,15.6 L13.6,15.6 L13.2,16.5 L12.2,16.1 L12.5,15.2 L12.2,14.9 L11.3,15.2 L10.9,14.2 L11.8,13.8 L11.8,13.4 L10.9,13.0 L11.3,12.0 L12.2,12.3 L12.5,12.0 L12.2,11.1 L13.2,10.7 L13.6,11.6 L14.0,11.6 L14.4,10.7 L15.4,11.1 L15.1,12.0 L15.4,12.3 L16.3,12.0 L16.7,13.0 L15.8,13.4Z M13.05,13.60 a0.75,0.75 0 1,0 1.5,0 a0.75,0.75 0 1,0 -1.5,0Z" fill="#7ea6ca" fill-rule="evenodd"/><circle cx="13.80" cy="13.60" r="1.5" fill="none" stroke="#acccE6" stroke-width="1.3"/></svg><div class="bar"></div><span class="c1" style="letter-spacing:0.11px">Microsoft .NET Framework NGEN ...</span><span class="c2">Microsoft ....</span><span class="c3"></span><span class="c4">Отключена</span></div>
<div class="row" style="top:261px"><svg class="ic" width="17" height="17" viewBox="0 0 17 17"><path d="M12.7,7.0 L14.8,7.1 L14.8,8.9 L12.7,9.0 L12.6,9.5 L14.4,10.6 L13.5,12.2 L11.6,11.2 L11.2,11.6 L12.2,13.5 L10.6,14.4 L9.5,12.6 L9.0,12.7 L8.9,14.8 L7.1,14.8 L7.0,12.7 L6.5,12.6 L5.4,14.4 L3.8,13.5 L4.8,11.6 L4.4,11.2 L2.5,12.2 L1.6,10.6 L3.4,9.5 L3.3,9.0 L1.2,8.9 L1.2,7.1 L3.3,7.0 L3.4,6.5 L1.6,5.4 L2.5,3.8 L4.4,4.8 L4.8,4.4 L3.8,2.5 L5.4,1.6 L6.5,3.4 L7.0,3.3 L7.1,1.2 L8.9,1.2 L9.0,3.3 L9.5,3.4 L10.6,1.6 L12.2,2.5 L11.2,4.4 L11.6,4.8 L13.5,3.8 L14.4,5.4 L12.6,6.5Z M5.10,8.00 a2.9,2.9 0 1,0 5.8,0 a2.9,2.9 0 1,0 -5.8,0Z" fill="#8db7d9" fill-rule="evenodd"/><circle cx="8" cy="8" r="4.0" fill="none" stroke="url(#gw1)" stroke-width="2.4"/><circle cx="8" cy="8" r="2.75" fill="none" stroke="#66788a" stroke-width=".7" stroke-opacity=".8"/><path d="M15.8,13.8 L16.7,14.2 L16.3,15.2 L15.4,14.9 L15.1,15.2 L15.4,16.1 L14.4,16.5 L14.0,15.6 L13.6,15.6 L13.2,16.5 L12.2,16.1 L12.5,15.2 L12.2,14.9 L11.3,15.2 L10.9,14.2 L11.8,13.8 L11.8,13.4 L10.9,13.0 L11.3,12.0 L12.2,12.3 L12.5,12.0 L12.2,11.1 L13.2,10.7 L13.6,11.6 L14.0,11.6 L14.4,10.7 L15.4,11.1 L15.1,12.0 L15.4,12.3 L16.3,12.0 L16.7,13.0 L15.8,13.4Z M13.05,13.60 a0.75,0.75 0 1,0 1.5,0 a0.75,0.75 0 1,0 -1.5,0Z" fill="#7ea6ca" fill-rule="evenodd"/><circle cx="13.80" cy="13.60" r="1.5" fill="none" stroke="#acccE6" stroke-width="1.3"/></svg><div class="bar"></div><span class="c1" style="letter-spacing:0.11px">Microsoft .NET Framework NGEN ...</span><span class="c2">Microsoft ....</span><span class="c3"></span><span class="c4">Отключена</span></div>
<div class="row" style="top:278px"><svg class="ic" width="17" height="17" viewBox="0 0 17 17"><path d="M12.7,7.0 L14.8,7.1 L14.8,8.9 L12.7,9.0 L12.6,9.5 L14.4,10.6 L13.5,12.2 L11.6,11.2 L11.2,11.6 L12.2,13.5 L10.6,14.4 L9.5,12.6 L9.0,12.7 L8.9,14.8 L7.1,14.8 L7.0,12.7 L6.5,12.6 L5.4,14.4 L3.8,13.5 L4.8,11.6 L4.4,11.2 L2.5,12.2 L1.6,10.6 L3.4,9.5 L3.3,9.0 L1.2,8.9 L1.2,7.1 L3.3,7.0 L3.4,6.5 L1.6,5.4 L2.5,3.8 L4.4,4.8 L4.8,4.4 L3.8,2.5 L5.4,1.6 L6.5,3.4 L7.0,3.3 L7.1,1.2 L8.9,1.2 L9.0,3.3 L9.5,3.4 L10.6,1.6 L12.2,2.5 L11.2,4.4 L11.6,4.8 L13.5,3.8 L14.4,5.4 L12.6,6.5Z M5.10,8.00 a2.9,2.9 0 1,0 5.8,0 a2.9,2.9 0 1,0 -5.8,0Z" fill="#8db7d9" fill-rule="evenodd"/><circle cx="8" cy="8" r="4.0" fill="none" stroke="url(#gw1)" stroke-width="2.4"/><circle cx="8" cy="8" r="2.75" fill="none" stroke="#66788a" stroke-width=".7" stroke-opacity=".8"/><path d="M15.8,13.8 L16.7,14.2 L16.3,15.2 L15.4,14.9 L15.1,15.2 L15.4,16.1 L14.4,16.5 L14.0,15.6 L13.6,15.6 L13.2,16.5 L12.2,16.1 L12.5,15.2 L12.2,14.9 L11.3,15.2 L10.9,14.2 L11.8,13.8 L11.8,13.4 L10.9,13.0 L11.3,12.0 L12.2,12.3 L12.5,12.0 L12.2,11.1 L13.2,10.7 L13.6,11.6 L14.0,11.6 L14.4,10.7 L15.4,11.1 L15.1,12.0 L15.4,12.3 L16.3,12.0 L16.7,13.0 L15.8,13.4Z M13.05,13.60 a0.75,0.75 0 1,0 1.5,0 a0.75,0.75 0 1,0 -1.5,0Z" fill="#7ea6ca" fill-rule="evenodd"/><circle cx="13.80" cy="13.60" r="1.5" fill="none" stroke="#acccE6" stroke-width="1.3"/></svg><div class="bar"></div><span class="c1" style="letter-spacing:0.11px">Microsoft .NET Framework NGEN ...</span><span class="c2">Microsoft ....</span><span class="c3"></span><span class="c4">Автоматичес...</span></div>
<div class="row" style="top:295px"><svg class="ic" width="17" height="17" viewBox="0 0 17 17"><path d="M12.7,7.0 L14.8,7.1 L14.8,8.9 L12.7,9.0 L12.6,9.5 L14.4,10.6 L13.5,12.2 L11.6,11.2 L11.2,11.6 L12.2,13.5 L10.6,14.4 L9.5,12.6 L9.0,12.7 L8.9,14.8 L7.1,14.8 L7.0,12.7 L6.5,12.6 L5.4,14.4 L3.8,13.5 L4.8,11.6 L4.4,11.2 L2.5,12.2 L1.6,10.6 L3.4,9.5 L3.3,9.0 L1.2,8.9 L1.2,7.1 L3.3,7.0 L3.4,6.5 L1.6,5.4 L2.5,3.8 L4.4,4.8 L4.8,4.4 L3.8,2.5 L5.4,1.6 L6.5,3.4 L7.0,3.3 L7.1,1.2 L8.9,1.2 L9.0,3.3 L9.5,3.4 L10.6,1.6 L12.2,2.5 L11.2,4.4 L11.6,4.8 L13.5,3.8 L14.4,5.4 L12.6,6.5Z M5.10,8.00 a2.9,2.9 0 1,0 5.8,0 a2.9,2.9 0 1,0 -5.8,0Z" fill="#8db7d9" fill-rule="evenodd"/><circle cx="8" cy="8" r="4.0" fill="none" stroke="url(#gw1)" stroke-width="2.4"/><circle cx="8" cy="8" r="2.75" fill="none" stroke="#66788a" stroke-width=".7" stroke-opacity=".8"/><path d="M15.8,13.8 L16.7,14.2 L16.3,15.2 L15.4,14.9 L15.1,15.2 L15.4,16.1 L14.4,16.5 L14.0,15.6 L13.6,15.6 L13.2,16.5 L12.2,16.1 L12.5,15.2 L12.2,14.9 L11.3,15.2 L10.9,14.2 L11.8,13.8 L11.8,13.4 L10.9,13.0 L11.3,12.0 L12.2,12.3 L12.5,12.0 L12.2,11.1 L13.2,10.7 L13.6,11.6 L14.0,11.6 L14.4,10.7 L15.4,11.1 L15.1,12.0 L15.4,12.3 L16.3,12.0 L16.7,13.0 L15.8,13.4Z M13.05,13.60 a0.75,0.75 0 1,0 1.5,0 a0.75,0.75 0 1,0 -1.5,0Z" fill="#7ea6ca" fill-rule="evenodd"/><circle cx="13.80" cy="13.60" r="1.5" fill="none" stroke="#acccE6" stroke-width="1.3"/></svg><div class="bar"></div><span class="c1" style="letter-spacing:0.11px">Microsoft .NET Framework NGEN ...</span><span class="c2">Microsoft ....</span><span class="c3"></span><span class="c4">Автоматичес...</span></div>
<div class="row" style="top:312px"><svg class="ic" width="17" height="17" viewBox="0 0 17 17"><path d="M12.7,7.0 L14.8,7.1 L14.8,8.9 L12.7,9.0 L12.6,9.5 L14.4,10.6 L13.5,12.2 L11.6,11.2 L11.2,11.6 L12.2,13.5 L10.6,14.4 L9.5,12.6 L9.0,12.7 L8.9,14.8 L7.1,14.8 L7.0,12.7 L6.5,12.6 L5.4,14.4 L3.8,13.5 L4.8,11.6 L4.4,11.2 L2.5,12.2 L1.6,10.6 L3.4,9.5 L3.3,9.0 L1.2,8.9 L1.2,7.1 L3.3,7.0 L3.4,6.5 L1.6,5.4 L2.5,3.8 L4.4,4.8 L4.8,4.4 L3.8,2.5 L5.4,1.6 L6.5,3.4 L7.0,3.3 L7.1,1.2 L8.9,1.2 L9.0,3.3 L9.5,3.4 L10.6,1.6 L12.2,2.5 L11.2,4.4 L11.6,4.8 L13.5,3.8 L14.4,5.4 L12.6,6.5Z M5.10,8.00 a2.9,2.9 0 1,0 5.8,0 a2.9,2.9 0 1,0 -5.8,0Z" fill="#8db7d9" fill-rule="evenodd"/><circle cx="8" cy="8" r="4.0" fill="none" stroke="url(#gw1)" stroke-width="2.4"/><circle cx="8" cy="8" r="2.75" fill="none" stroke="#66788a" stroke-width=".7" stroke-opacity=".8"/><path d="M15.8,13.8 L16.7,14.2 L16.3,15.2 L15.4,14.9 L15.1,15.2 L15.4,16.1 L14.4,16.5 L14.0,15.6 L13.6,15.6 L13.2,16.5 L12.2,16.1 L12.5,15.2 L12.2,14.9 L11.3,15.2 L10.9,14.2 L11.8,13.8 L11.8,13.4 L10.9,13.0 L11.3,12.0 L12.2,12.3 L12.5,12.0 L12.2,11.1 L13.2,10.7 L13.6,11.6 L14.0,11.6 L14.4,10.7 L15.4,11.1 L15.1,12.0 L15.4,12.3 L16.3,12.0 L16.7,13.0 L15.8,13.4Z M13.05,13.60 a0.75,0.75 0 1,0 1.5,0 a0.75,0.75 0 1,0 -1.5,0Z" fill="#7ea6ca" fill-rule="evenodd"/><circle cx="13.80" cy="13.60" r="1.5" fill="none" stroke="#acccE6" stroke-width="1.3"/></svg><div class="bar"></div><span class="c1">Mozilla Maintenance Service</span><span class="c2">Служба п...</span><span class="c3"></span><span class="c4">Вручную</span></div>
<div class="row" style="top:329px"><svg class="ic" width="17" height="17" viewBox="0 0 17 17"><path d="M12.7,7.0 L14.8,7.1 L14.8,8.9 L12.7,9.0 L12.6,9.5 L14.4,10.6 L13.5,12.2 L11.6,11.2 L11.2,11.6 L12.2,13.5 L10.6,14.4 L9.5,12.6 L9.0,12.7 L8.9,14.8 L7.1,14.8 L7.0,12.7 L6.5,12.6 L5.4,14.4 L3.8,13.5 L4.8,11.6 L4.4,11.2 L2.5,12.2 L1.6,10.6 L3.4,9.5 L3.3,9.0 L1.2,8.9 L1.2,7.1 L3.3,7.0 L3.4,6.5 L1.6,5.4 L2.5,3.8 L4.4,4.8 L4.8,4.4 L3.8,2.5 L5.4,1.6 L6.5,3.4 L7.0,3.3 L7.1,1.2 L8.9,1.2 L9.0,3.3 L9.5,3.4 L10.6,1.6 L12.2,2.5 L11.2,4.4 L11.6,4.8 L13.5,3.8 L14.4,5.4 L12.6,6.5Z M5.10,8.00 a2.9,2.9 0 1,0 5.8,0 a2.9,2.9 0 1,0 -5.8,0Z" fill="#8db7d9" fill-rule="evenodd"/><circle cx="8" cy="8" r="4.0" fill="none" stroke="url(#gw1)" stroke-width="2.4"/><circle cx="8" cy="8" r="2.75" fill="none" stroke="#66788a" stroke-width=".7" stroke-opacity=".8"/><path d="M15.8,13.8 L16.7,14.2 L16.3,15.2 L15.4,14.9 L15.1,15.2 L15.4,16.1 L14.4,16.5 L14.0,15.6 L13.6,15.6 L13.2,16.5 L12.2,16.1 L12.5,15.2 L12.2,14.9 L11.3,15.2 L10.9,14.2 L11.8,13.8 L11.8,13.4 L10.9,13.0 L11.3,12.0 L12.2,12.3 L12.5,12.0 L12.2,11.1 L13.2,10.7 L13.6,11.6 L14.0,11.6 L14.4,10.7 L15.4,11.1 L15.1,12.0 L15.4,12.3 L16.3,12.0 L16.7,13.0 L15.8,13.4Z M13.05,13.60 a0.75,0.75 0 1,0 1.5,0 a0.75,0.75 0 1,0 -1.5,0Z" fill="#7ea6ca" fill-rule="evenodd"/><circle cx="13.80" cy="13.60" r="1.5" fill="none" stroke="#acccE6" stroke-width="1.3"/></svg><div class="bar"></div><span class="c1">NVIDIA Display Driver Service</span><span class="c2">Provides s...</span><span class="c3">Работает</span><span class="c4">Автоматичес...</span></div>
<div class="row" style="top:346px"><svg class="ic" width="17" height="17" viewBox="0 0 17 17"><path d="M12.7,7.0 L14.8,7.1 L14.8,8.9 L12.7,9.0 L12.6,9.5 L14.4,10.6 L13.5,12.2 L11.6,11.2 L11.2,11.6 L12.2,13.5 L10.6,14.4 L9.5,12.6 L9.0,12.7 L8.9,14.8 L7.1,14.8 L7.0,12.7 L6.5,12.6 L5.4,14.4 L3.8,13.5 L4.8,11.6 L4.4,11.2 L2.5,12.2 L1.6,10.6 L3.4,9.5 L3.3,9.0 L1.2,8.9 L1.2,7.1 L3.3,7.0 L3.4,6.5 L1.6,5.4 L2.5,3.8 L4.4,4.8 L4.8,4.4 L3.8,2.5 L5.4,1.6 L6.5,3.4 L7.0,3.3 L7.1,1.2 L8.9,1.2 L9.0,3.3 L9.5,3.4 L10.6,1.6 L12.2,2.5 L11.2,4.4 L11.6,4.8 L13.5,3.8 L14.4,5.4 L12.6,6.5Z M5.10,8.00 a2.9,2.9 0 1,0 5.8,0 a2.9,2.9 0 1,0 -5.8,0Z" fill="#8db7d9" fill-rule="evenodd"/><circle cx="8" cy="8" r="4.0" fill="none" stroke="url(#gw1)" stroke-width="2.4"/><circle cx="8" cy="8" r="2.75" fill="none" stroke="#66788a" stroke-width=".7" stroke-opacity=".8"/><path d="M15.8,13.8 L16.7,14.2 L16.3,15.2 L15.4,14.9 L15.1,15.2 L15.4,16.1 L14.4,16.5 L14.0,15.6 L13.6,15.6 L13.2,16.5 L12.2,16.1 L12.5,15.2 L12.2,14.9 L11.3,15.2 L10.9,14.2 L11.8,13.8 L11.8,13.4 L10.9,13.0 L11.3,12.0 L12.2,12.3 L12.5,12.0 L12.2,11.1 L13.2,10.7 L13.6,11.6 L14.0,11.6 L14.4,10.7 L15.4,11.1 L15.1,12.0 L15.4,12.3 L16.3,12.0 L16.7,13.0 L15.8,13.4Z M13.05,13.60 a0.75,0.75 0 1,0 1.5,0 a0.75,0.75 0 1,0 -1.5,0Z" fill="#7ea6ca" fill-rule="evenodd"/><circle cx="13.80" cy="13.60" r="1.5" fill="none" stroke="#acccE6" stroke-width="1.3"/></svg><div class="bar"></div><span class="c1" style="letter-spacing:-0.04px">NVIDIA GeForce Experience Service</span><span class="c2">NVIDIA Ge...</span><span class="c3">Работает</span><span class="c4">Автоматичес...</span></div>
<div class="row" style="top:363px"><svg class="ic" width="17" height="17" viewBox="0 0 17 17"><path d="M12.7,7.0 L14.8,7.1 L14.8,8.9 L12.7,9.0 L12.6,9.5 L14.4,10.6 L13.5,12.2 L11.6,11.2 L11.2,11.6 L12.2,13.5 L10.6,14.4 L9.5,12.6 L9.0,12.7 L8.9,14.8 L7.1,14.8 L7.0,12.7 L6.5,12.6 L5.4,14.4 L3.8,13.5 L4.8,11.6 L4.4,11.2 L2.5,12.2 L1.6,10.6 L3.4,9.5 L3.3,9.0 L1.2,8.9 L1.2,7.1 L3.3,7.0 L3.4,6.5 L1.6,5.4 L2.5,3.8 L4.4,4.8 L4.8,4.4 L3.8,2.5 L5.4,1.6 L6.5,3.4 L7.0,3.3 L7.1,1.2 L8.9,1.2 L9.0,3.3 L9.5,3.4 L10.6,1.6 L12.2,2.5 L11.2,4.4 L11.6,4.8 L13.5,3.8 L14.4,5.4 L12.6,6.5Z M5.10,8.00 a2.9,2.9 0 1,0 5.8,0 a2.9,2.9 0 1,0 -5.8,0Z" fill="#8db7d9" fill-rule="evenodd"/><circle cx="8" cy="8" r="4.0" fill="none" stroke="url(#gw1)" stroke-width="2.4"/><circle cx="8" cy="8" r="2.75" fill="none" stroke="#66788a" stroke-width=".7" stroke-opacity=".8"/><path d="M15.8,13.8 L16.7,14.2 L16.3,15.2 L15.4,14.9 L15.1,15.2 L15.4,16.1 L14.4,16.5 L14.0,15.6 L13.6,15.6 L13.2,16.5 L12.2,16.1 L12.5,15.2 L12.2,14.9 L11.3,15.2 L10.9,14.2 L11.8,13.8 L11.8,13.4 L10.9,13.0 L11.3,12.0 L12.2,12.3 L12.5,12.0 L12.2,11.1 L13.2,10.7 L13.6,11.6 L14.0,11.6 L14.4,10.7 L15.4,11.1 L15.1,12.0 L15.4,12.3 L16.3,12.0 L16.7,13.0 L15.8,13.4Z M13.05,13.60 a0.75,0.75 0 1,0 1.5,0 a0.75,0.75 0 1,0 -1.5,0Z" fill="#7ea6ca" fill-rule="evenodd"/><circle cx="13.80" cy="13.60" r="1.5" fill="none" stroke="#acccE6" stroke-width="1.3"/></svg><div class="bar"></div><span class="c1">NVIDIA Network Service</span><span class="c2">NVIDIA Net...</span><span class="c3">Работает</span><span class="c4">Автоматичес...</span></div>
<div class="row" style="top:380px"><svg class="ic" width="17" height="17" viewBox="0 0 17 17"><path d="M12.7,7.0 L14.8,7.1 L14.8,8.9 L12.7,9.0 L12.6,9.5 L14.4,10.6 L13.5,12.2 L11.6,11.2 L11.2,11.6 L12.2,13.5 L10.6,14.4 L9.5,12.6 L9.0,12.7 L8.9,14.8 L7.1,14.8 L7.0,12.7 L6.5,12.6 L5.4,14.4 L3.8,13.5 L4.8,11.6 L4.4,11.2 L2.5,12.2 L1.6,10.6 L3.4,9.5 L3.3,9.0 L1.2,8.9 L1.2,7.1 L3.3,7.0 L3.4,6.5 L1.6,5.4 L2.5,3.8 L4.4,4.8 L4.8,4.4 L3.8,2.5 L5.4,1.6 L6.5,3.4 L7.0,3.3 L7.1,1.2 L8.9,1.2 L9.0,3.3 L9.5,3.4 L10.6,1.6 L12.2,2.5 L11.2,4.4 L11.6,4.8 L13.5,3.8 L14.4,5.4 L12.6,6.5Z M5.10,8.00 a2.9,2.9 0 1,0 5.8,0 a2.9,2.9 0 1,0 -5.8,0Z" fill="#8db7d9" fill-rule="evenodd"/><circle cx="8" cy="8" r="4.0" fill="none" stroke="url(#gw1)" stroke-width="2.4"/><circle cx="8" cy="8" r="2.75" fill="none" stroke="#66788a" stroke-width=".7" stroke-opacity=".8"/><path d="M15.8,13.8 L16.7,14.2 L16.3,15.2 L15.4,14.9 L15.1,15.2 L15.4,16.1 L14.4,16.5 L14.0,15.6 L13.6,15.6 L13.2,16.5 L12.2,16.1 L12.5,15.2 L12.2,14.9 L11.3,15.2 L10.9,14.2 L11.8,13.8 L11.8,13.4 L10.9,13.0 L11.3,12.0 L12.2,12.3 L12.5,12.0 L12.2,11.1 L13.2,10.7 L13.6,11.6 L14.0,11.6 L14.4,10.7 L15.4,11.1 L15.1,12.0 L15.4,12.3 L16.3,12.0 L16.7,13.0 L15.8,13.4Z M13.05,13.60 a0.75,0.75 0 1,0 1.5,0 a0.75,0.75 0 1,0 -1.5,0Z" fill="#7ea6ca" fill-rule="evenodd"/><circle cx="13.80" cy="13.60" r="1.5" fill="none" stroke="#acccE6" stroke-width="1.3"/></svg><div class="bar"></div><span class="c1">NVIDIA Stereoscopic 3D Driver Se...</span><span class="c2">Provides s...</span><span class="c3">Работает</span><span class="c4">Автоматичес...</span></div>
<div class="row" style="top:397px"><svg class="ic" width="17" height="17" viewBox="0 0 17 17"><path d="M12.7,7.0 L14.8,7.1 L14.8,8.9 L12.7,9.0 L12.6,9.5 L14.4,10.6 L13.5,12.2 L11.6,11.2 L11.2,11.6 L12.2,13.5 L10.6,14.4 L9.5,12.6 L9.0,12.7 L8.9,14.8 L7.1,14.8 L7.0,12.7 L6.5,12.6 L5.4,14.4 L3.8,13.5 L4.8,11.6 L4.4,11.2 L2.5,12.2 L1.6,10.6 L3.4,9.5 L3.3,9.0 L1.2,8.9 L1.2,7.1 L3.3,7.0 L3.4,6.5 L1.6,5.4 L2.5,3.8 L4.4,4.8 L4.8,4.4 L3.8,2.5 L5.4,1.6 L6.5,3.4 L7.0,3.3 L7.1,1.2 L8.9,1.2 L9.0,3.3 L9.5,3.4 L10.6,1.6 L12.2,2.5 L11.2,4.4 L11.6,4.8 L13.5,3.8 L14.4,5.4 L12.6,6.5Z M5.10,8.00 a2.9,2.9 0 1,0 5.8,0 a2.9,2.9 0 1,0 -5.8,0Z" fill="#8db7d9" fill-rule="evenodd"/><circle cx="8" cy="8" r="4.0" fill="none" stroke="url(#gw1)" stroke-width="2.4"/><circle cx="8" cy="8" r="2.75" fill="none" stroke="#66788a" stroke-width=".7" stroke-opacity=".8"/><path d="M15.8,13.8 L16.7,14.2 L16.3,15.2 L15.4,14.9 L15.1,15.2 L15.4,16.1 L14.4,16.5 L14.0,15.6 L13.6,15.6 L13.2,16.5 L12.2,16.1 L12.5,15.2 L12.2,14.9 L11.3,15.2 L10.9,14.2 L11.8,13.8 L11.8,13.4 L10.9,13.0 L11.3,12.0 L12.2,12.3 L12.5,12.0 L12.2,11.1 L13.2,10.7 L13.6,11.6 L14.0,11.6 L14.4,10.7 L15.4,11.1 L15.1,12.0 L15.4,12.3 L16.3,12.0 L16.7,13.0 L15.8,13.4Z M13.05,13.60 a0.75,0.75 0 1,0 1.5,0 a0.75,0.75 0 1,0 -1.5,0Z" fill="#7ea6ca" fill-rule="evenodd"/><circle cx="13.80" cy="13.60" r="1.5" fill="none" stroke="#acccE6" stroke-width="1.3"/></svg><div class="bar"></div><span class="c1">NVIDIA Streamer Service</span><span class="c2">Service for ...</span><span class="c3">Работает</span><span class="c4">Автоматичес...</span></div>
<div class="row" style="top:414px"><svg class="ic" width="17" height="17" viewBox="0 0 17 17"><path d="M12.7,7.0 L14.8,7.1 L14.8,8.9 L12.7,9.0 L12.6,9.5 L14.4,10.6 L13.5,12.2 L11.6,11.2 L11.2,11.6 L12.2,13.5 L10.6,14.4 L9.5,12.6 L9.0,12.7 L8.9,14.8 L7.1,14.8 L7.0,12.7 L6.5,12.6 L5.4,14.4 L3.8,13.5 L4.8,11.6 L4.4,11.2 L2.5,12.2 L1.6,10.6 L3.4,9.5 L3.3,9.0 L1.2,8.9 L1.2,7.1 L3.3,7.0 L3.4,6.5 L1.6,5.4 L2.5,3.8 L4.4,4.8 L4.8,4.4 L3.8,2.5 L5.4,1.6 L6.5,3.4 L7.0,3.3 L7.1,1.2 L8.9,1.2 L9.0,3.3 L9.5,3.4 L10.6,1.6 L12.2,2.5 L11.2,4.4 L11.6,4.8 L13.5,3.8 L14.4,5.4 L12.6,6.5Z M5.10,8.00 a2.9,2.9 0 1,0 5.8,0 a2.9,2.9 0 1,0 -5.8,0Z" fill="#8db7d9" fill-rule="evenodd"/><circle cx="8" cy="8" r="4.0" fill="none" stroke="url(#gw1)" stroke-width="2.4"/><circle cx="8" cy="8" r="2.75" fill="none" stroke="#66788a" stroke-width=".7" stroke-opacity=".8"/><path d="M15.8,13.8 L16.7,14.2 L16.3,15.2 L15.4,14.9 L15.1,15.2 L15.4,16.1 L14.4,16.5 L14.0,15.6 L13.6,15.6 L13.2,16.5 L12.2,16.1 L12.5,15.2 L12.2,14.9 L11.3,15.2 L10.9,14.2 L11.8,13.8 L11.8,13.4 L10.9,13.0 L11.3,12.0 L12.2,12.3 L12.5,12.0 L12.2,11.1 L13.2,10.7 L13.6,11.6 L14.0,11.6 L14.4,10.7 L15.4,11.1 L15.1,12.0 L15.4,12.3 L16.3,12.0 L16.7,13.0 L15.8,13.4Z M13.05,13.60 a0.75,0.75 0 1,0 1.5,0 a0.75,0.75 0 1,0 -1.5,0Z" fill="#7ea6ca" fill-rule="evenodd"/><circle cx="13.80" cy="13.60" r="1.5" fill="none" stroke="#acccE6" stroke-width="1.3"/></svg><div class="bar"></div><span class="c1" style="letter-spacing:-0.09px">Office 64 Source Engine</span><span class="c2">Сохранен...</span><span class="c3"></span><span class="c4">Вручную</span></div>
<div class="row" style="top:431px"><svg class="ic" width="17" height="17" viewBox="0 0 17 17"><path d="M12.7,7.0 L14.8,7.1 L14.8,8.9 L12.7,9.0 L12.6,9.5 L14.4,10.6 L13.5,12.2 L11.6,11.2 L11.2,11.6 L12.2,13.5 L10.6,14.4 L9.5,12.6 L9.0,12.7 L8.9,14.8 L7.1,14.8 L7.0,12.7 L6.5,12.6 L5.4,14.4 L3.8,13.5 L4.8,11.6 L4.4,11.2 L2.5,12.2 L1.6,10.6 L3.4,9.5 L3.3,9.0 L1.2,8.9 L1.2,7.1 L3.3,7.0 L3.4,6.5 L1.6,5.4 L2.5,3.8 L4.4,4.8 L4.8,4.4 L3.8,2.5 L5.4,1.6 L6.5,3.4 L7.0,3.3 L7.1,1.2 L8.9,1.2 L9.0,3.3 L9.5,3.4 L10.6,1.6 L12.2,2.5 L11.2,4.4 L11.6,4.8 L13.5,3.8 L14.4,5.4 L12.6,6.5Z M5.10,8.00 a2.9,2.9 0 1,0 5.8,0 a2.9,2.9 0 1,0 -5.8,0Z" fill="#8db7d9" fill-rule="evenodd"/><circle cx="8" cy="8" r="4.0" fill="none" stroke="url(#gw1)" stroke-width="2.4"/><circle cx="8" cy="8" r="2.75" fill="none" stroke="#66788a" stroke-width=".7" stroke-opacity=".8"/><path d="M15.8,13.8 L16.7,14.2 L16.3,15.2 L15.4,14.9 L15.1,15.2 L15.4,16.1 L14.4,16.5 L14.0,15.6 L13.6,15.6 L13.2,16.5 L12.2,16.1 L12.5,15.2 L12.2,14.9 L11.3,15.2 L10.9,14.2 L11.8,13.8 L11.8,13.4 L10.9,13.0 L11.3,12.0 L12.2,12.3 L12.5,12.0 L12.2,11.1 L13.2,10.7 L13.6,11.6 L14.0,11.6 L14.4,10.7 L15.4,11.1 L15.1,12.0 L15.4,12.3 L16.3,12.0 L16.7,13.0 L15.8,13.4Z M13.05,13.60 a0.75,0.75 0 1,0 1.5,0 a0.75,0.75 0 1,0 -1.5,0Z" fill="#7ea6ca" fill-rule="evenodd"/><circle cx="13.80" cy="13.60" r="1.5" fill="none" stroke="#acccE6" stroke-width="1.3"/></svg><div class="bar"></div><span class="c1" style="letter-spacing:0.1px">Office Software Protection Platform</span><span class="c2">Enables th...</span><span class="c3"></span><span class="c4">Вручную</span></div>
<div class="row" style="top:448px"><svg class="ic" width="17" height="17" viewBox="0 0 17 17"><path d="M12.7,7.0 L14.8,7.1 L14.8,8.9 L12.7,9.0 L12.6,9.5 L14.4,10.6 L13.5,12.2 L11.6,11.2 L11.2,11.6 L12.2,13.5 L10.6,14.4 L9.5,12.6 L9.0,12.7 L8.9,14.8 L7.1,14.8 L7.0,12.7 L6.5,12.6 L5.4,14.4 L3.8,13.5 L4.8,11.6 L4.4,11.2 L2.5,12.2 L1.6,10.6 L3.4,9.5 L3.3,9.0 L1.2,8.9 L1.2,7.1 L3.3,7.0 L3.4,6.5 L1.6,5.4 L2.5,3.8 L4.4,4.8 L4.8,4.4 L3.8,2.5 L5.4,1.6 L6.5,3.4 L7.0,3.3 L7.1,1.2 L8.9,1.2 L9.0,3.3 L9.5,3.4 L10.6,1.6 L12.2,2.5 L11.2,4.4 L11.6,4.8 L13.5,3.8 L14.4,5.4 L12.6,6.5Z M5.10,8.00 a2.9,2.9 0 1,0 5.8,0 a2.9,2.9 0 1,0 -5.8,0Z" fill="#8db7d9" fill-rule="evenodd"/><circle cx="8" cy="8" r="4.0" fill="none" stroke="url(#gw1)" stroke-width="2.4"/><circle cx="8" cy="8" r="2.75" fill="none" stroke="#66788a" stroke-width=".7" stroke-opacity=".8"/><path d="M15.8,13.8 L16.7,14.2 L16.3,15.2 L15.4,14.9 L15.1,15.2 L15.4,16.1 L14.4,16.5 L14.0,15.6 L13.6,15.6 L13.2,16.5 L12.2,16.1 L12.5,15.2 L12.2,14.9 L11.3,15.2 L10.9,14.2 L11.8,13.8 L11.8,13.4 L10.9,13.0 L11.3,12.0 L12.2,12.3 L12.5,12.0 L12.2,11.1 L13.2,10.7 L13.6,11.6 L14.0,11.6 L14.4,10.7 L15.4,11.1 L15.1,12.0 L15.4,12.3 L16.3,12.0 L16.7,13.0 L15.8,13.4Z M13.05,13.60 a0.75,0.75 0 1,0 1.5,0 a0.75,0.75 0 1,0 -1.5,0Z" fill="#7ea6ca" fill-rule="evenodd"/><circle cx="13.80" cy="13.60" r="1.5" fill="none" stroke="#acccE6" stroke-width="1.3"/></svg><div class="bar"></div><span class="c1">Parental Controls</span><span class="c2">Эта служб...</span><span class="c3"></span><span class="c4">Вручную</span></div>
<div class="row sel" style="top:465px"><svg class="ic" width="17" height="17" viewBox="0 0 17 17"><path d="M12.7,7.0 L14.8,7.1 L14.8,8.9 L12.7,9.0 L12.6,9.5 L14.4,10.6 L13.5,12.2 L11.6,11.2 L11.2,11.6 L12.2,13.5 L10.6,14.4 L9.5,12.6 L9.0,12.7 L8.9,14.8 L7.1,14.8 L7.0,12.7 L6.5,12.6 L5.4,14.4 L3.8,13.5 L4.8,11.6 L4.4,11.2 L2.5,12.2 L1.6,10.6 L3.4,9.5 L3.3,9.0 L1.2,8.9 L1.2,7.1 L3.3,7.0 L3.4,6.5 L1.6,5.4 L2.5,3.8 L4.4,4.8 L4.8,4.4 L3.8,2.5 L5.4,1.6 L6.5,3.4 L7.0,3.3 L7.1,1.2 L8.9,1.2 L9.0,3.3 L9.5,3.4 L10.6,1.6 L12.2,2.5 L11.2,4.4 L11.6,4.8 L13.5,3.8 L14.4,5.4 L12.6,6.5Z M5.10,8.00 a2.9,2.9 0 1,0 5.8,0 a2.9,2.9 0 1,0 -5.8,0Z" fill="#65727e" fill-rule="evenodd"/><circle cx="8" cy="8" r="4.0" fill="none" stroke="#8492a0" stroke-width="2.4"/><circle cx="8" cy="8" r="2.75" fill="none" stroke="#38424c" stroke-width=".7" stroke-opacity=".8"/><path d="M15.8,13.8 L16.7,14.2 L16.3,15.2 L15.4,14.9 L15.1,15.2 L15.4,16.1 L14.4,16.5 L14.0,15.6 L13.6,15.6 L13.2,16.5 L12.2,16.1 L12.5,15.2 L12.2,14.9 L11.3,15.2 L10.9,14.2 L11.8,13.8 L11.8,13.4 L10.9,13.0 L11.3,12.0 L12.2,12.3 L12.5,12.0 L12.2,11.1 L13.2,10.7 L13.6,11.6 L14.0,11.6 L14.4,10.7 L15.4,11.1 L15.1,12.0 L15.4,12.3 L16.3,12.0 L16.7,13.0 L15.8,13.4Z M13.05,13.60 a0.75,0.75 0 1,0 1.5,0 a0.75,0.75 0 1,0 -1.5,0Z" fill="#65727e" fill-rule="evenodd"/><circle cx="13.80" cy="13.60" r="1.5" fill="none" stroke="#8492a0" stroke-width="1.3"/></svg><div class="bar"></div><span class="c1">Plug-and-Play</span><span class="c2">Позволяет...</span><span class="c3">Работает</span><span class="c4">Автоматичес...</span></div>
<div class="row" style="top:482px"><svg class="ic" width="17" height="17" viewBox="0 0 17 17"><path d="M12.7,7.0 L14.8,7.1 L14.8,8.9 L12.7,9.0 L12.6,9.5 L14.4,10.6 L13.5,12.2 L11.6,11.2 L11.2,11.6 L12.2,13.5 L10.6,14.4 L9.5,12.6 L9.0,12.7 L8.9,14.8 L7.1,14.8 L7.0,12.7 L6.5,12.6 L5.4,14.4 L3.8,13.5 L4.8,11.6 L4.4,11.2 L2.5,12.2 L1.6,10.6 L3.4,9.5 L3.3,9.0 L1.2,8.9 L1.2,7.1 L3.3,7.0 L3.4,6.5 L1.6,5.4 L2.5,3.8 L4.4,4.8 L4.8,4.4 L3.8,2.5 L5.4,1.6 L6.5,3.4 L7.0,3.3 L7.1,1.2 L8.9,1.2 L9.0,3.3 L9.5,3.4 L10.6,1.6 L12.2,2.5 L11.2,4.4 L11.6,4.8 L13.5,3.8 L14.4,5.4 L12.6,6.5Z M5.10,8.00 a2.9,2.9 0 1,0 5.8,0 a2.9,2.9 0 1,0 -5.8,0Z" fill="#8db7d9" fill-rule="evenodd"/><circle cx="8" cy="8" r="4.0" fill="none" stroke="url(#gw1)" stroke-width="2.4"/><circle cx="8" cy="8" r="2.75" fill="none" stroke="#66788a" stroke-width=".7" stroke-opacity=".8"/><path d="M15.8,13.8 L16.7,14.2 L16.3,15.2 L15.4,14.9 L15.1,15.2 L15.4,16.1 L14.4,16.5 L14.0,15.6 L13.6,15.6 L13.2,16.5 L12.2,16.1 L12.5,15.2 L12.2,14.9 L11.3,15.2 L10.9,14.2 L11.8,13.8 L11.8,13.4 L10.9,13.0 L11.3,12.0 L12.2,12.3 L12.5,12.0 L12.2,11.1 L13.2,10.7 L13.6,11.6 L14.0,11.6 L14.4,10.7 L15.4,11.1 L15.1,12.0 L15.4,12.3 L16.3,12.0 L16.7,13.0 L15.8,13.4Z M13.05,13.60 a0.75,0.75 0 1,0 1.5,0 a0.75,0.75 0 1,0 -1.5,0Z" fill="#7ea6ca" fill-rule="evenodd"/><circle cx="13.80" cy="13.60" r="1.5" fill="none" stroke="#acccE6" stroke-width="1.3"/></svg><div class="bar"></div><span class="c1" style="letter-spacing:0.12px">Quality Windows Audio Video Ex...</span><span class="c2">Quality Wi...</span><span class="c3"></span><span class="c4">Вручную</span></div>
<div class="row" style="top:499px"><svg class="ic" width="17" height="17" viewBox="0 0 17 17"><path d="M12.7,7.0 L14.8,7.1 L14.8,8.9 L12.7,9.0 L12.6,9.5 L14.4,10.6 L13.5,12.2 L11.6,11.2 L11.2,11.6 L12.2,13.5 L10.6,14.4 L9.5,12.6 L9.0,12.7 L8.9,14.8 L7.1,14.8 L7.0,12.7 L6.5,12.6 L5.4,14.4 L3.8,13.5 L4.8,11.6 L4.4,11.2 L2.5,12.2 L1.6,10.6 L3.4,9.5 L3.3,9.0 L1.2,8.9 L1.2,7.1 L3.3,7.0 L3.4,6.5 L1.6,5.4 L2.5,3.8 L4.4,4.8 L4.8,4.4 L3.8,2.5 L5.4,1.6 L6.5,3.4 L7.0,3.3 L7.1,1.2 L8.9,1.2 L9.0,3.3 L9.5,3.4 L10.6,1.6 L12.2,2.5 L11.2,4.4 L11.6,4.8 L13.5,3.8 L14.4,5.4 L12.6,6.5Z M5.10,8.00 a2.9,2.9 0 1,0 5.8,0 a2.9,2.9 0 1,0 -5.8,0Z" fill="#8db7d9" fill-rule="evenodd"/><circle cx="8" cy="8" r="4.0" fill="none" stroke="url(#gw1)" stroke-width="2.4"/><circle cx="8" cy="8" r="2.75" fill="none" stroke="#66788a" stroke-width=".7" stroke-opacity=".8"/><path d="M15.8,13.8 L16.7,14.2 L16.3,15.2 L15.4,14.9 L15.1,15.2 L15.4,16.1 L14.4,16.5 L14.0,15.6 L13.6,15.6 L13.2,16.5 L12.2,16.1 L12.5,15.2 L12.2,14.9 L11.3,15.2 L10.9,14.2 L11.8,13.8 L11.8,13.4 L10.9,13.0 L11.3,12.0 L12.2,12.3 L12.5,12.0 L12.2,11.1 L13.2,10.7 L13.6,11.6 L14.0,11.6 L14.4,10.7 L15.4,11.1 L15.1,12.0 L15.4,12.3 L16.3,12.0 L16.7,13.0 L15.8,13.4Z M13.05,13.60 a0.75,0.75 0 1,0 1.5,0 a0.75,0.75 0 1,0 -1.5,0Z" fill="#7ea6ca" fill-rule="evenodd"/><circle cx="13.80" cy="13.60" r="1.5" fill="none" stroke="#acccE6" stroke-width="1.3"/></svg><div class="bar"></div><span class="c1" style="letter-spacing:0.15px">Skype Updater</span><span class="c2">Enables th...</span><span class="c3"></span><span class="c4">Автоматичес...</span></div>
<div class="row" style="top:516px"><svg class="ic" width="17" height="17" viewBox="0 0 17 17"><path d="M12.7,7.0 L14.8,7.1 L14.8,8.9 L12.7,9.0 L12.6,9.5 L14.4,10.6 L13.5,12.2 L11.6,11.2 L11.2,11.6 L12.2,13.5 L10.6,14.4 L9.5,12.6 L9.0,12.7 L8.9,14.8 L7.1,14.8 L7.0,12.7 L6.5,12.6 L5.4,14.4 L3.8,13.5 L4.8,11.6 L4.4,11.2 L2.5,12.2 L1.6,10.6 L3.4,9.5 L3.3,9.0 L1.2,8.9 L1.2,7.1 L3.3,7.0 L3.4,6.5 L1.6,5.4 L2.5,3.8 L4.4,4.8 L4.8,4.4 L3.8,2.5 L5.4,1.6 L6.5,3.4 L7.0,3.3 L7.1,1.2 L8.9,1.2 L9.0,3.3 L9.5,3.4 L10.6,1.6 L12.2,2.5 L11.2,4.4 L11.6,4.8 L13.5,3.8 L14.4,5.4 L12.6,6.5Z M5.10,8.00 a2.9,2.9 0 1,0 5.8,0 a2.9,2.9 0 1,0 -5.8,0Z" fill="#8db7d9" fill-rule="evenodd"/><circle cx="8" cy="8" r="4.0" fill="none" stroke="url(#gw1)" stroke-width="2.4"/><circle cx="8" cy="8" r="2.75" fill="none" stroke="#66788a" stroke-width=".7" stroke-opacity=".8"/><path d="M15.8,13.8 L16.7,14.2 L16.3,15.2 L15.4,14.9 L15.1,15.2 L15.4,16.1 L14.4,16.5 L14.0,15.6 L13.6,15.6 L13.2,16.5 L12.2,16.1 L12.5,15.2 L12.2,14.9 L11.3,15.2 L10.9,14.2 L11.8,13.8 L11.8,13.4 L10.9,13.0 L11.3,12.0 L12.2,12.3 L12.5,12.0 L12.2,11.1 L13.2,10.7 L13.6,11.6 L14.0,11.6 L14.4,10.7 L15.4,11.1 L15.1,12.0 L15.4,12.3 L16.3,12.0 L16.7,13.0 L15.8,13.4Z M13.05,13.60 a0.75,0.75 0 1,0 1.5,0 a0.75,0.75 0 1,0 -1.5,0Z" fill="#7ea6ca" fill-rule="evenodd"/><circle cx="13.80" cy="13.60" r="1.5" fill="none" stroke="#acccE6" stroke-width="1.3"/></svg><div class="bar"></div><span class="c1">Superfetch</span><span class="c2">Поддержи...</span><span class="c3">Работает</span><span class="c4">Автоматичес...</span></div>
<div id="vs"></div><div id="hs"></div>
<div class="thumb v" style="left:805px;top:134px;width:10px;height:51px"></div>
<div class="thumb" style="left:356px;top:537px;width:353px;height:10px"></div>
<svg width="820" height="592" viewBox="0 0 820 592" style="left:0;top:0;pointer-events:none">
<path d="M438.8,122 L446.2,122 L442.5,118Z" fill="#424242"/>
<path d="M806.5,126 L812.5,126 L809.5,122.6Z M806.5,526 L812.5,526 L809.5,529.2Z M348.5,538.7 L348.5,544.3 L345.2,541.5Z M794,538.7 L794,544.3 L797.3,541.5Z M11.3,555.8 L11.3,561.4 L8,558.6Z M113,555.8 L113,561.4 L116.3,558.6Z" fill="#1e1e1e"/>
</svg>
<div id="corner"></div>
<div id="tabs">
<svg width="694" height="18" viewBox="126 550 694 18" style="left:0;top:0">
<path d="M126.5,550 L133.5,567.5 L213,567.5 L220.3,550Z" fill="#fdfdfd"/>
<path d="M220.3,551.5 L302.5,551.5 L295.8,567.5 L213,567.5Z" fill="#e9e9e9"/>
<path d="M126.5,550.5 L133.5,567.5 M213,567.5 L220.3,551.2 M302.5,551.5 L295.8,567.5 M217.2,560.7 L220.6,567.5" fill="none" stroke="#505050" stroke-width="1"/>
<path d="M220,551.5 L819,551.5" fill="none" stroke="#6e6e6e" stroke-width="1"/>
<path d="M220,552.5 L819,552.5" fill="none" stroke="#f0f0f0" stroke-width="1"/>
</svg>
<span style="left:10.5px;top:3.5px">Расширенный</span><span style="left:97px;top:3.5px;letter-spacing:-.2px">Стандартный</span>
</div>
<div id="status"><div class="sd" style="left:598px"></div><div class="sd" style="left:731px"></div><div class="sd" style="left:815px"></div></div>
<div id="bl"></div><div id="br"></div><div id="bb"></div>
</div>
</body></html>
